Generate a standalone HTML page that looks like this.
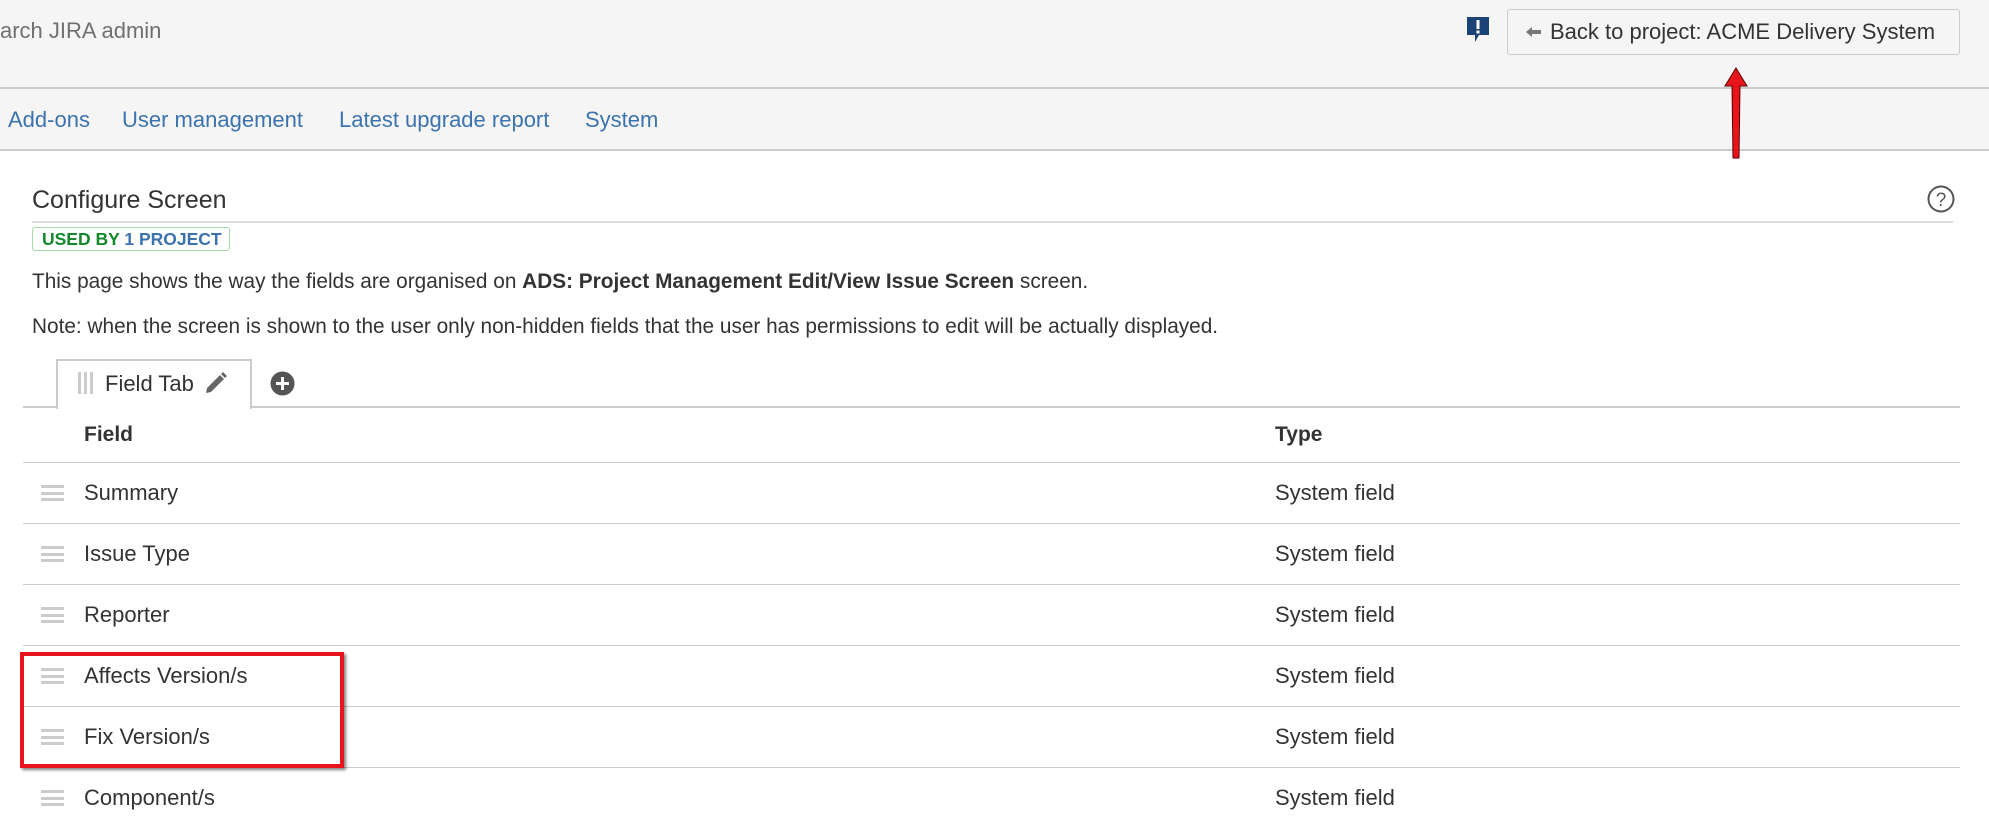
<!DOCTYPE html>
<html><head><meta charset="utf-8"><style>
*{margin:0;padding:0;box-sizing:border-box}
body{width:1989px;height:821px;overflow:hidden;background:#fff;font-family:"Liberation Sans",Arial,sans-serif;color:#333;position:relative}
.a{position:absolute;white-space:nowrap}
.top{position:absolute;left:0;top:0;width:1989px;height:89px;background:#f5f5f5;border-bottom:2px solid #ccc}
.nav{position:absolute;left:0;top:89px;width:1989px;height:62px;background:#f5f5f5;border-bottom:2px solid #ccc}
.nav span{position:absolute;top:18px;font-size:22px;color:#3b73af}
.btn{position:absolute;left:1507px;top:9px;width:453px;height:46px;border:1px solid #ccc;border-radius:3px;background:#f5f5f5;font-size:22px;line-height:44px;padding-left:42px;color:#333}
.row{position:absolute;left:23px;width:1937px;height:61px;border-top:1px solid #ccc}
.row .n{position:absolute;left:61px;top:17px;font-size:22px}
.row .t{position:absolute;left:1252px;top:17px;font-size:22px}
.ham{position:absolute;left:18px;top:22px;width:23px;height:16px;border-top:3px solid #ccc;border-bottom:3px solid #ccc}
.ham:after{content:"";position:absolute;left:0;top:3.5px;width:23px;height:3px;background:#ccc}
</style></head><body>
<div class="top"></div>
<div class="a" style="left:0;top:18px;font-size:22px;color:#707070">arch JIRA admin</div>
<svg class="a" style="left:1465px;top:16px" width="26" height="28" viewBox="0 0 26 28"><path d="M2 1h22v18H14l-4 7v-7H2z" fill="#1c4378"/><rect x="11.5" y="4" width="3" height="9" fill="#fff"/><rect x="11.5" y="14.5" width="3" height="3" fill="#fff"/></svg>
<div class="btn"><svg style="position:absolute;left:18px;top:17px" width="16" height="10" viewBox="0 0 16 10"><path d="M0 5 L6 0 L6 3 L15 3 L15 7 L6 7 L6 10 Z" fill="#777"/></svg>Back to project: ACME Delivery System</div>
<div class="nav"><span style="left:8px">Add-ons</span><span style="left:122px">User management</span><span style="left:339px">Latest upgrade report</span><span style="left:585px">System</span></div>
<svg class="a" style="left:1722px;top:66px" width="28" height="96" viewBox="0 0 28 96"><path d="M14 2 L25 20 L18 20 L17 92 L11 92 L10 20 L3 20 Z" fill="#e8141b" stroke="#5a0000" stroke-width="1"/></svg>
<div class="a" style="left:32px;top:186px;font-size:25px">Configure Screen</div>
<div class="a" style="left:32px;top:221px;width:1921px;height:2px;background:#ddd"></div>
<svg class="a" style="left:1927px;top:185px" width="28" height="28" viewBox="0 0 28 28"><circle cx="14" cy="14" r="12.5" fill="none" stroke="#555" stroke-width="2"/><text x="14" y="21" text-anchor="middle" font-family="Liberation Sans" font-size="19" fill="#555">?</text></svg>
<div class="a" style="left:32px;top:227px;width:198px;height:24px;border:1px solid #a6d8a6;border-radius:3px;font-size:17.5px;font-weight:bold;line-height:22px;padding-left:9px"><span style="color:#14892c">USED BY</span> <span style="color:#3b73af">1 PROJECT</span></div>
<div class="a" style="left:32px;top:270px;font-size:20.8px">This page shows the way the fields are organised on <b>ADS: Project Management Edit/View Issue Screen</b> screen.</div>
<div class="a" style="left:32px;top:315px;font-size:20.8px">Note: when the screen is shown to the user only non-hidden fields that the user has permissions to edit will be actually displayed.</div>
<div class="a" style="left:23px;top:406px;width:1937px;height:2px;background:#ccc"></div>
<div class="a" style="left:56px;top:359px;width:196px;height:50px;border:2px solid #ccc;border-bottom:none;background:#fff"></div>
<div class="a" style="left:78px;top:372px;width:3px;height:22px;background:#ccc"></div>
<div class="a" style="left:84px;top:372px;width:3px;height:22px;background:#ccc"></div>
<div class="a" style="left:90px;top:372px;width:3px;height:22px;background:#ccc"></div>
<div class="a" style="left:105px;top:371px;font-size:22px">Field Tab</div>
<svg class="a" style="left:204px;top:370px" width="25" height="25" viewBox="0 0 25 25"><path d="M3 18 L16 5 L20 9 L7 22 L2 23 Z M17 4 L19 2 L23 6 L21 8 Z" fill="#666"/></svg>
<svg class="a" style="left:270px;top:371px" width="25" height="25" viewBox="0 0 25 25"><circle cx="12.5" cy="12.5" r="12" fill="#555"/><rect x="6" y="11" width="13" height="3" fill="#fff"/><rect x="11" y="6" width="3" height="13" fill="#fff"/></svg>
<div class="a" style="left:84px;top:423px;font-size:21px;font-weight:bold">Field</div>
<div class="a" style="left:1275px;top:423px;font-size:21px;font-weight:bold">Type</div>
<div class="row" style="top:462px"><div class="ham"></div><div class="n">Summary</div><div class="t">System field</div></div>
<div class="row" style="top:523px"><div class="ham"></div><div class="n">Issue Type</div><div class="t">System field</div></div>
<div class="row" style="top:584px"><div class="ham"></div><div class="n">Reporter</div><div class="t">System field</div></div>
<div class="row" style="top:645px"><div class="ham"></div><div class="n">Affects Version/s</div><div class="t">System field</div></div>
<div class="row" style="top:706px"><div class="ham"></div><div class="n">Fix Version/s</div><div class="t">System field</div></div>
<div class="row" style="top:767px"><div class="ham"></div><div class="n">Component/s</div><div class="t">System field</div></div>
<div class="a" style="left:20px;top:652px;width:324px;height:116px;border:4px solid #e8141b;box-shadow:2px 2px 3px rgba(0,0,0,.5)"></div>
</body></html>
